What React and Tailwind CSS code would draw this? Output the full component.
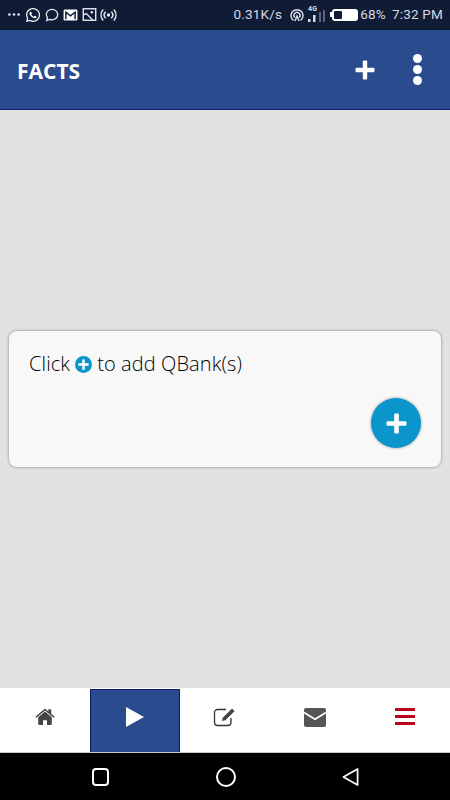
import { FaWhatsapp } from "react-icons/fa";

const font = { open: "font-['Open_Sans','Noto_Sans',sans-serif]" };

function PlusGlyph({ className }) {
  return (
    <svg viewBox="0 0 20 20" className={className} fill="currentColor">
      <path d="M7.8 1.5a1 1 0 0 1 1-1h2.4a1 1 0 0 1 1 1v6.3h6.3a1 1 0 0 1 1 1v2.4a1 1 0 0 1-1 1h-6.3v6.3a1 1 0 0 1-1 1H8.8a1 1 0 0 1-1-1v-6.3H1.5a1 1 0 0 1-1-1V8.8a1 1 0 0 1 1-1h6.3z" />
    </svg>
  );
}

function StatusBar() {
  return (
    <div className="flex h-[30px] shrink-0 items-center justify-between border-b border-[#0a1226] bg-[#101b36] pl-[8px] pr-[7px] text-[#e4e7ee]">
      <div className="flex items-center">
        <svg viewBox="0 0 13 3" className="h-[3px] w-[12px]" fill="currentColor">
          <circle cx="1.5" cy="1.5" r="1.4" />
          <circle cx="6.5" cy="1.5" r="1.4" />
          <circle cx="11.5" cy="1.5" r="1.4" />
        </svg>
        <FaWhatsapp className="ml-[5px] h-[16px] w-[16px] text-white" />
        <svg viewBox="0 0 16 16" className="ml-[4px] h-[14px] w-[14px]" fill="none" stroke="currentColor" strokeWidth="1.5">
          <path d="M8 1.500c3.700 0 6.500 2.700 6.500 6s-2.800 6-6.500 6c-.9 0-1.700-.1-2.500-.5L2 14.200l.8-3.200C2 10 1.500 8.800 1.500 7.500c0-3.300 2.800-6 6.500-6z" />
        </svg>
        <svg viewBox="0 0 15 13" className="ml-[4px] h-[12px] w-[15px]">
          <rect width="15" height="12" y="0.500" rx="1.500" fill="#fff" />
          <path d="M2.500 11V3.500l5 3.800 5-3.800V11" fill="none" stroke="#101b36" strokeWidth="1.600" />
        </svg>
        <svg viewBox="0 0 15 14" className="ml-[4px] h-[13px] w-[15px]" fill="none" stroke="currentColor" strokeWidth="1.500">
          <rect x="0.800" y="0.800" width="13.400" height="12.400" />
          <path d="M1 7.500l3-1.500 7 7" />
          <circle cx="10" cy="4.500" r="1.300" fill="currentColor" stroke="none" />
        </svg>
        <svg viewBox="0 0 17 12" className="ml-[3px] h-[12px] w-[17px]" fill="none" stroke="currentColor" strokeWidth="1.500" strokeLinecap="round">
          <circle cx="8.500" cy="6" r="1.700" fill="currentColor" stroke="none" />
          <path d="M5.300 3.300a4 4 0 0 0 0 5.400M11.700 3.300a4 4 0 0 1 0 5.400M2.800 1a8 8 0 0 0 0 10M14.200 1a8 8 0 0 1 0 10" />
        </svg>
      </div>
      <div className="flex items-center font-['Roboto',sans-serif] text-[13.500px] leading-none tracking-[0.2px] text-[#d5d9e2]">
        <span className="mt-[1px]">0.31K/s</span>
        <svg viewBox="0 0 14 14" className="ml-[8px] h-[14px] w-[14px]" fill="none" stroke="currentColor" strokeWidth="1.500">
          <path d="M3.500 12.500a6 6 0 1 1 7 0" />
          <path d="M4.800 9.500a3 3 0 1 1 4.400 0" />
          <path d="M5 13l2-5 2 5" />
        </svg>
        <svg viewBox="0 0 18 19" className="mb-[2px] ml-[4px] h-[19px] w-[18px]" fill="currentColor">
          <rect x="0" y="15" width="2.500" height="3" />
          <rect x="5" y="11" width="2.500" height="7" />
          <rect x="11" y="8" width="2" height="10" fill="#59627a" />
          <rect x="15" y="6" width="2" height="12" fill="#59627a" />
          <text x="0" y="7" fontSize="7" fontWeight="700" fontFamily="Roboto, sans-serif">4G</text>
        </svg>
        <div className="ml-[4px] flex items-center">
          <div className="h-[5px] w-[2px] bg-white" />
          <div className="flex h-[12px] w-[26px] items-center rounded-[3px] bg-white">
            <div className="ml-[2px] h-[8px] w-[8px] rounded-[1px] bg-[#101b36]" />
          </div>
        </div>
        <span className="ml-[2px] mt-[1px]">68%</span>
        <span className="ml-[6px] mt-[1px]">7:32 PM</span>
      </div>
    </div>
  );
}

function Header() {
  return (
    <div className="flex h-[80px] shrink-0 items-center justify-between border-b border-[#0b1d6b] bg-[#2a4b8d] pl-[17px] pr-[28px] text-white">
      <span className={`${font.open} mt-[3px] text-[21px] font-bold leading-none`}>FACTS</span>
      <div className="flex items-center gap-[38px]">
        <PlusGlyph className="h-[20px] w-[20px]" />
        <div className="flex flex-col gap-[2px]">
          <div className="h-[9px] w-[9px] rounded-full bg-white" />
          <div className="h-[9px] w-[9px] rounded-full bg-white" />
          <div className="h-[9px] w-[9px] rounded-full bg-white" />
        </div>
      </div>
    </div>
  );
}

function Card() {
  return (
    <div className="flex h-[136px] w-[432px] flex-col justify-between rounded-[8px] bg-[#f8f8f8] pb-[19px] pl-[20px] pr-[20px] pt-[20px] shadow-[0_0_3px_rgba(0,0,0,0.45)]">
      <div className={`${font.open} flex items-center text-[20px] font-light leading-[26px] tracking-[0.1px] text-black`}>
        <span>Click</span>
        <span className="ml-[5px] mr-[5px] flex h-[17px] w-[17px] items-center justify-center rounded-full bg-[#0a96cc] text-white">
          <PlusGlyph className="h-[11px] w-[11px]" />
        </span>
        <span>to add QBank(s)</span>
      </div>
      <div className="flex justify-end">
        <button className="flex h-[50px] w-[50px] items-center justify-center rounded-full bg-[#0a96cc] text-white shadow-[0_0_3px_rgba(0,0,0,0.4)]">
          <PlusGlyph className="h-[21px] w-[21px]" />
        </button>
      </div>
    </div>
  );
}

function BottomNav() {
  return (
    <div className="grid h-[65px] shrink-0 grid-cols-5 border-b border-[#c9c9c9] bg-white">
      <div className="flex items-center justify-center pb-[7px]">
        <svg viewBox="0 0 20 17" className="h-[17px] w-[20px]" fill="#444">
          <path d="M10 3.600L3.200 9.200V15.800c0 .7.500 1.200 1.200 1.200H8v-4.800h4V17h3.600c.7 0 1.200-.5 1.200-1.200V9.200z" />
          <path d="M.4 8.700L10 .5l3.400 2.900V1.200h2.800v4.600l3.400 2.900-1 1.100L10 2.500 1.400 9.800z" />
        </svg>
      </div>
      <div className="mt-[1px] flex items-center justify-center border border-b-0 border-[#0b1d6b] bg-[#2a4b8d] pb-[8px]">
        <svg viewBox="0 0 19 21" className="h-[20px] w-[18px]" fill="#fff">
          <path d="M0 0l19 10.500L0 21z" />
        </svg>
      </div>
      <div className="flex items-center justify-center pb-[7px]">
        <svg viewBox="0 0 24 20" className="h-[20px] w-[24px]" fill="none" stroke="#333" strokeWidth="1.300">
          <path d="M13 2.500H4.500A3 3 0 0 0 1.500 5.500v10a3 3 0 0 0 3 3h10.500a3 3 0 0 0 3-3V11" />
          <path d="M8.500 14.500l.8-3.700L19 1.200l3 3-9.700 9.500z" fill="#444" stroke="#fff" strokeWidth="0.800" />
        </svg>
      </div>
      <div className="flex items-center justify-center pb-[6px]">
        <svg viewBox="0 0 22 19" className="h-[19px] w-[22px]">
          <rect width="22" height="19" rx="2" fill="#555" />
          <path d="M0 4.500l11 6.800 11-6.800" fill="none" stroke="#fff" strokeWidth="1.700" />
        </svg>
      </div>
      <div className="flex items-center justify-center pb-[7px]">
        <div className="flex w-[20px] flex-col gap-[4px]">
          <div className="h-[3px] bg-[#bb0620]" />
          <div className="h-[3px] bg-[#bb0620]" />
          <div className="h-[3px] bg-[#bb0620]" />
        </div>
      </div>
    </div>
  );
}

function SystemNav() {
  return (
    <div className="flex h-[47px] shrink-0 items-center bg-black pl-[92px] text-white">
      <div className="h-[18px] w-[17px] rounded-[4px] border-2 border-white" />
      <div className="ml-[107px] h-[20px] w-[20px] rounded-full border-2 border-white" />
      <svg viewBox="0 0 18 20" className="ml-[106px] h-[20px] w-[17px]" fill="none" stroke="currentColor" strokeWidth="1.800" strokeLinejoin="round">
        <path d="M16.500 1.500v17L1.500 10z" />
      </svg>
    </div>
  );
}

export default function App() {
  return (
    <div className="flex h-[800px] w-[450px] flex-col overflow-hidden bg-[#e2e2e2]">
      <StatusBar />
      <Header />
      <div className="flex flex-1 items-center justify-center">
        <Card />
      </div>
      <BottomNav />
      <SystemNav />
    </div>
  );
}
